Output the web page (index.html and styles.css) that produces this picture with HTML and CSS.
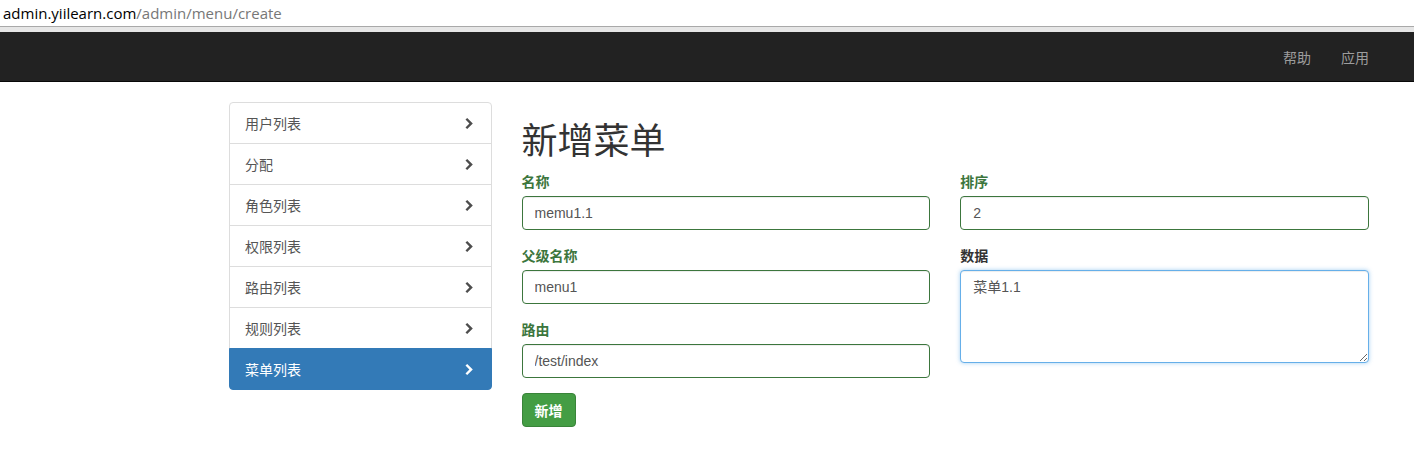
FILE: index.html
```html
<!DOCTYPE html>
<html lang="zh-CN">
<head>
  <meta charset="UTF-8">
  <meta name="viewport" content="width=device-width, initial-scale=1.0">
  <title>新增菜单</title>
  <link rel="stylesheet" href="styles.css">
</head>
<body>
  <div class="address-bar">
    <span class="host">admin.yiilearn.com</span><span class="path">/admin/menu/create</span>
  </div>
  <div class="address-gap"></div>

  <nav class="navbar">
    <div class="container navbar-inner">
      <ul class="navbar-nav">
        <li><a href="#">帮助</a></li>
        <li><a href="#">应用</a></li>
      </ul>
    </div>
  </nav>

  <div class="container main">
    <div class="sidebar">
      <div class="list-group">
        <a href="#" class="list-group-item">用户列表 <svg class="chevron" viewBox="0 0 9 11"><polygon points="0.5,1.6 2.2,0 7.8,5.5 2.2,11 0.5,9.4 4.4,5.5"/></svg></a>
        <a href="#" class="list-group-item">分配 <svg class="chevron" viewBox="0 0 9 11"><polygon points="0.5,1.6 2.2,0 7.8,5.5 2.2,11 0.5,9.4 4.4,5.5"/></svg></a>
        <a href="#" class="list-group-item">角色列表 <svg class="chevron" viewBox="0 0 9 11"><polygon points="0.5,1.6 2.2,0 7.8,5.5 2.2,11 0.5,9.4 4.4,5.5"/></svg></a>
        <a href="#" class="list-group-item">权限列表 <svg class="chevron" viewBox="0 0 9 11"><polygon points="0.5,1.6 2.2,0 7.8,5.5 2.2,11 0.5,9.4 4.4,5.5"/></svg></a>
        <a href="#" class="list-group-item">路由列表 <svg class="chevron" viewBox="0 0 9 11"><polygon points="0.5,1.6 2.2,0 7.8,5.5 2.2,11 0.5,9.4 4.4,5.5"/></svg></a>
        <a href="#" class="list-group-item">规则列表 <svg class="chevron" viewBox="0 0 9 11"><polygon points="0.5,1.6 2.2,0 7.8,5.5 2.2,11 0.5,9.4 4.4,5.5"/></svg></a>
        <a href="#" class="list-group-item active">菜单列表 <svg class="chevron" viewBox="0 0 9 11"><polygon points="0.5,1.6 2.2,0 7.8,5.5 2.2,11 0.5,9.4 4.4,5.5"/></svg></a>
      </div>
    </div>

    <div class="content">
      <h1>新增菜单</h1>
      <form class="menu-form">
        <div class="form-col">
          <div class="form-group has-success">
            <label>名称</label>
            <input class="form-control" type="text" value="memu1.1">
          </div>
          <div class="form-group has-success">
            <label>父级名称</label>
            <input class="form-control" type="text" value="menu1">
          </div>
          <div class="form-group has-success">
            <label>路由</label>
            <input class="form-control" type="text" value="/test/index">
          </div>
          <button type="button" class="btn btn-success">新增</button>
        </div>
        <div class="form-col">
          <div class="form-group has-success">
            <label>排序</label>
            <input class="form-control" type="text" value="2">
          </div>
          <div class="form-group">
            <label>数据</label>
            <textarea class="form-control focused" rows="4">菜单1.1</textarea>
          </div>
        </div>
      </form>
    </div>
  </div>
</body>
</html>
```

FILE: styles.css
```css
body {
  margin: 0;
  padding: 0;
  font-family: "Liberation Sans", "Noto Sans CJK SC", sans-serif;
  font-size: 14px;
  line-height: 20px;
  color: #333;
  background-color: #fff;
}
.address-bar {
  height: 27px;
  box-sizing: border-box;
  padding: 3px 0 0 3px;
  font-family: "Open Sans", "Noto Sans", sans-serif;
  font-size: 15px;
  line-height: 20px;
  border-bottom: 1px solid #a9a9a9;
  white-space: nowrap;
}
.host {
  color: #000;
}
.path {
  color: #777;
}
.address-gap {
  height: 5px;
  background-color: #e6e6e6;
}
.container {
  width: 1140px;
  margin-left: 229px;
}
.navbar {
  background-color: #222;
  border-bottom: 1px solid #080808;
  height: 50px;
  box-sizing: border-box;
  margin-bottom: 20px;
}
.navbar-inner {
  display: flex;
  justify-content: flex-end;
}
.navbar-nav {
  list-style: none;
  margin: 0 -15px 0 0;
  padding: 0;
  display: flex;
}
.navbar-nav a {
  display: block;
  padding: 15px;
  color: #9d9d9d;
  text-decoration: none;
  font-family: "Noto Sans CJK SC", sans-serif;
}
.main {
  display: flex;
  gap: 30px;
  align-items: flex-start;
}
.sidebar {
  width: 262.5px;
  flex-shrink: 0;
}
.list-group {
  display: flex;
  flex-direction: column;
}
.list-group-item {
  display: flex;
  justify-content: space-between;
  align-items: center;
  padding: 10px 15px;
  margin-bottom: -1px;
  border: 1px solid #ddd;
  background-color: #fff;
  color: #555;
  text-decoration: none;
  font-family: "Noto Sans CJK SC", sans-serif;
  font-size: 14px;
  line-height: 20px;
}
.list-group-item:first-child {
  border-top-left-radius: 4px;
  border-top-right-radius: 4px;
}
.list-group-item:last-child {
  margin-bottom: 0;
  border-bottom-left-radius: 4px;
  border-bottom-right-radius: 4px;
}
.list-group-item.active {
  background-color: #337ab7;
  border-color: #337ab7;
  color: #fff;
}
.chevron {
  width: 9px;
  height: 11px;
  margin-right: 2px;
  fill: #4d4d4d;
}
.active .chevron {
  fill: #fff;
}
.content {
  flex: 1;
}
h1 {
  font-family: "Liberation Sans", "Noto Sans CJK SC", sans-serif;
  font-size: 36px;
  font-weight: 400;
  line-height: 39px;
  margin: 20px 0 10px;
  color: #333;
}
.menu-form {
  display: flex;
  gap: 30px;
}
.form-col {
  flex: 1;
}
.form-group {
  margin-bottom: 15px;
}
label {
  display: block;
  font-family: "Noto Sans CJK SC", sans-serif;
  font-weight: bold;
  margin-bottom: 5px;
  color: #333;
}
.form-control {
  display: block;
  width: 100%;
  height: 34px;
  box-sizing: border-box;
  padding: 6px 12px;
  font-family: "Liberation Sans", "Noto Sans CJK SC", sans-serif;
  font-size: 14px;
  line-height: 20px;
  color: #555;
  background-color: #fff;
  border: 1px solid #ccc;
  border-radius: 4px;
  box-shadow: inset 0 1px 1px rgba(0, 0, 0, 0.075);
}
textarea.form-control {
  height: 93px;
  resize: vertical;
}
.has-success label {
  color: #3c763d;
}
.has-success .form-control {
  border-color: #3c763d;
}
.form-control.focused {
  border-color: #66afe9;
  outline: 0;
  box-shadow: inset 0 1px 1px rgba(0, 0, 0, 0.075), 0 0 4px rgba(102, 175, 233, 0.6);
}
.btn {
  display: inline-block;
  padding: 6px 12px;
  font-family: "Noto Sans CJK SC", sans-serif;
  font-size: 14px;
  font-weight: bold;
  line-height: 20px;
  border-radius: 4px;
  border: 1px solid transparent;
  cursor: pointer;
}
.btn-success {
  color: #fff;
  background-color: #449d44;
  border-color: #398439;
}
```
